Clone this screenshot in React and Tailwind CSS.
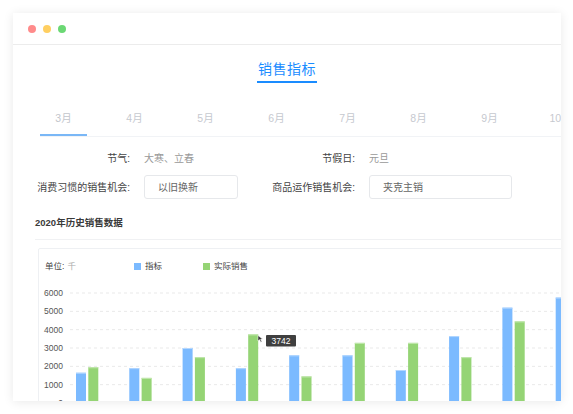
import React from "react";

const FONT = { fontFamily: '"Liberation Sans", "Noto Sans CJK SC", sans-serif' };

const data = [
  [1650, 1950],
  [1900, 1370],
  [3000, 2500],
  [1900, 3742],
  [2600, 1450],
  [2600, 3280],
  [1800, 3280],
  [3650, 2500],
  [5200, 4450],
  [5750, 4800],
];

const months = ["3月", "4月", "5月", "6月", "7月", "8月", "9月", "10月"];

function Chart() {
  const y0 = 403;
  const k = 110 / 6000;
  const ticks = [6000, 5000, 4000, 3000, 2000, 1000, 0];
  return (
    <svg width="540" height="130" className="block">
      <g transform="translate(-39,-283)">
        {ticks.map((t) => {
          const y = y0 - t * k;
          return (
            <g key={t}>
              <line x1="70" x2="620" y1={y} y2={y} stroke="#e9e9e9" strokeWidth="1" strokeDasharray="3 3" />
              <text x="63" y={y + 3} textAnchor="end" fontSize="8.5" fill="#555" style={FONT}>
                {t}
              </text>
            </g>
          );
        })}
        {data.map(([b, g], i) => {
          const bx = 76 + 53.3 * i;
          const gx = bx + 12.3;
          const by = y0 - b * k;
          const gy = y0 - g * k;
          return (
            <g key={i}>
              <rect x={bx} y={by} width="10" height={y0 - by} fill="#7bbaff" />
              <rect x={bx} y={by} width="10" height="1" fill="#b4d7ff" />
              <rect x={gx} y={gy} width="10" height={y0 - gy} fill="#95d475" />
              <rect x={gx} y={gy} width="10" height="1" fill="#c4e8b0" />
            </g>
          );
        })}
        <path d="M258 335.5 L258 341 L259.5 339.6 L260.8 342.2 L261.8 341.7 L260.6 339.2 L262.6 339.1 Z" fill="#333" stroke="#fff" strokeWidth="0.5" />
        <rect x="266" y="335" width="30" height="11.5" rx="1" fill="#3f3f3f" />
        <text x="281" y="343.8" textAnchor="middle" fontSize="8.5" fill="#fff" style={FONT}>
          3742
        </text>
      </g>
    </svg>
  );
}

export default function App() {
  return (
    <div className="w-[573px] h-[414px] bg-white overflow-hidden pt-[13px] pl-[13px]" style={FONT}>
      <div className="w-[548px] h-[388px] bg-white overflow-hidden shadow-[0_1px_10px_rgba(0,0,0,0.09)]">
        {/* title bar */}
        <div className="h-[32px] border-b border-[#ececec] flex items-center pl-[15px] gap-[7px]">
          <span className="w-[8px] h-[8px] rounded-full bg-[#ff8b8b]" />
          <span className="w-[8px] h-[8px] rounded-full bg-[#ffcf61]" />
          <span className="w-[8px] h-[8px] rounded-full bg-[#6bd874]" />
        </div>

        {/* heading */}
        <div className="flex justify-center mt-[14px]">
          <div className="text-[14px] leading-[20px] text-[#1a8cff] border-b-2 border-[#1a8cff] pb-[2px] px-[1px] tracking-[0.5px]">
            销售指标
          </div>
        </div>

        {/* tabs */}
        <div className="mt-[24px] ml-[27px] flex gap-[24px] border-b border-[#f1f3f6] whitespace-nowrap">
          {months.map((m, i) => (
            <div
              key={m}
              className={
                "w-[47px] shrink-0 text-center text-[10.5px] leading-[22px] pb-[5px] border-b-2 " +
                (i === 0 ? "border-[#7ab7f6] text-[#c3c6cc]" : "border-transparent text-[#c6c9cf]")
              }
            >
              {m}
            </div>
          ))}
        </div>

        {/* form */}
        <div className="mt-[11px] flex items-center h-[20px] text-[10px]">
          <div className="w-[117px] text-right text-[#444]">节气:</div>
          <div className="w-[111px] pl-[14px] text-[#999]">大寒、立春</div>
          <div className="w-[114px] text-right text-[#444]">节假日:</div>
          <div className="pl-[14px] text-[#999]">元旦</div>
        </div>
        <div className="mt-[7px] flex items-center h-[24px] text-[10px]">
          <div className="w-[117px] text-right text-[#444]">消费习惯的销售机会:</div>
          <div className="w-[111px] pl-[14px]">
            <div className="w-[94px] h-[24px] border border-[#e6e8eb] rounded-[3px] flex items-center pl-[13px] text-[#666]">
              以旧换新
            </div>
          </div>
          <div className="w-[114px] text-right text-[#444]">商品运作销售机会:</div>
          <div className="pl-[14px]">
            <div className="w-[143px] h-[24px] border border-[#e6e8eb] rounded-[3px] flex items-center pl-[13px] text-[#666]">
              夹克主销
            </div>
          </div>
        </div>

        {/* section title */}
        <div className="mt-[16px] ml-[22px] text-[9.5px] leading-[16px] font-semibold text-[#3a3a3a]">2020年历史销售数据</div>
        <div className="mt-[8px] ml-[22px] h-px bg-[#f0f1f3]" />

        {/* chart panel */}
        <div className="mt-[8px] ml-[25px] w-[560px] border border-[#eef0f3] rounded-[2px]">
          <div className="h-[34px] flex items-center pl-[6px] text-[8.5px]">
            <div className="w-[89px] text-[#444]">
              单位:<span className="text-[#aaa] ml-[3px]">千</span>
            </div>
            <div className="w-[69px] flex items-center">
              <span className="w-[7px] h-[7px] bg-[#7bbaff] mr-[4px]" />
              <span className="text-[#444]">指标</span>
            </div>
            <div className="flex items-center">
              <span className="w-[7px] h-[7px] bg-[#95d475] mr-[4px]" />
              <span className="text-[#444]">实际销售</span>
            </div>
          </div>
          <Chart />
        </div>
      </div>
    </div>
  );
}
